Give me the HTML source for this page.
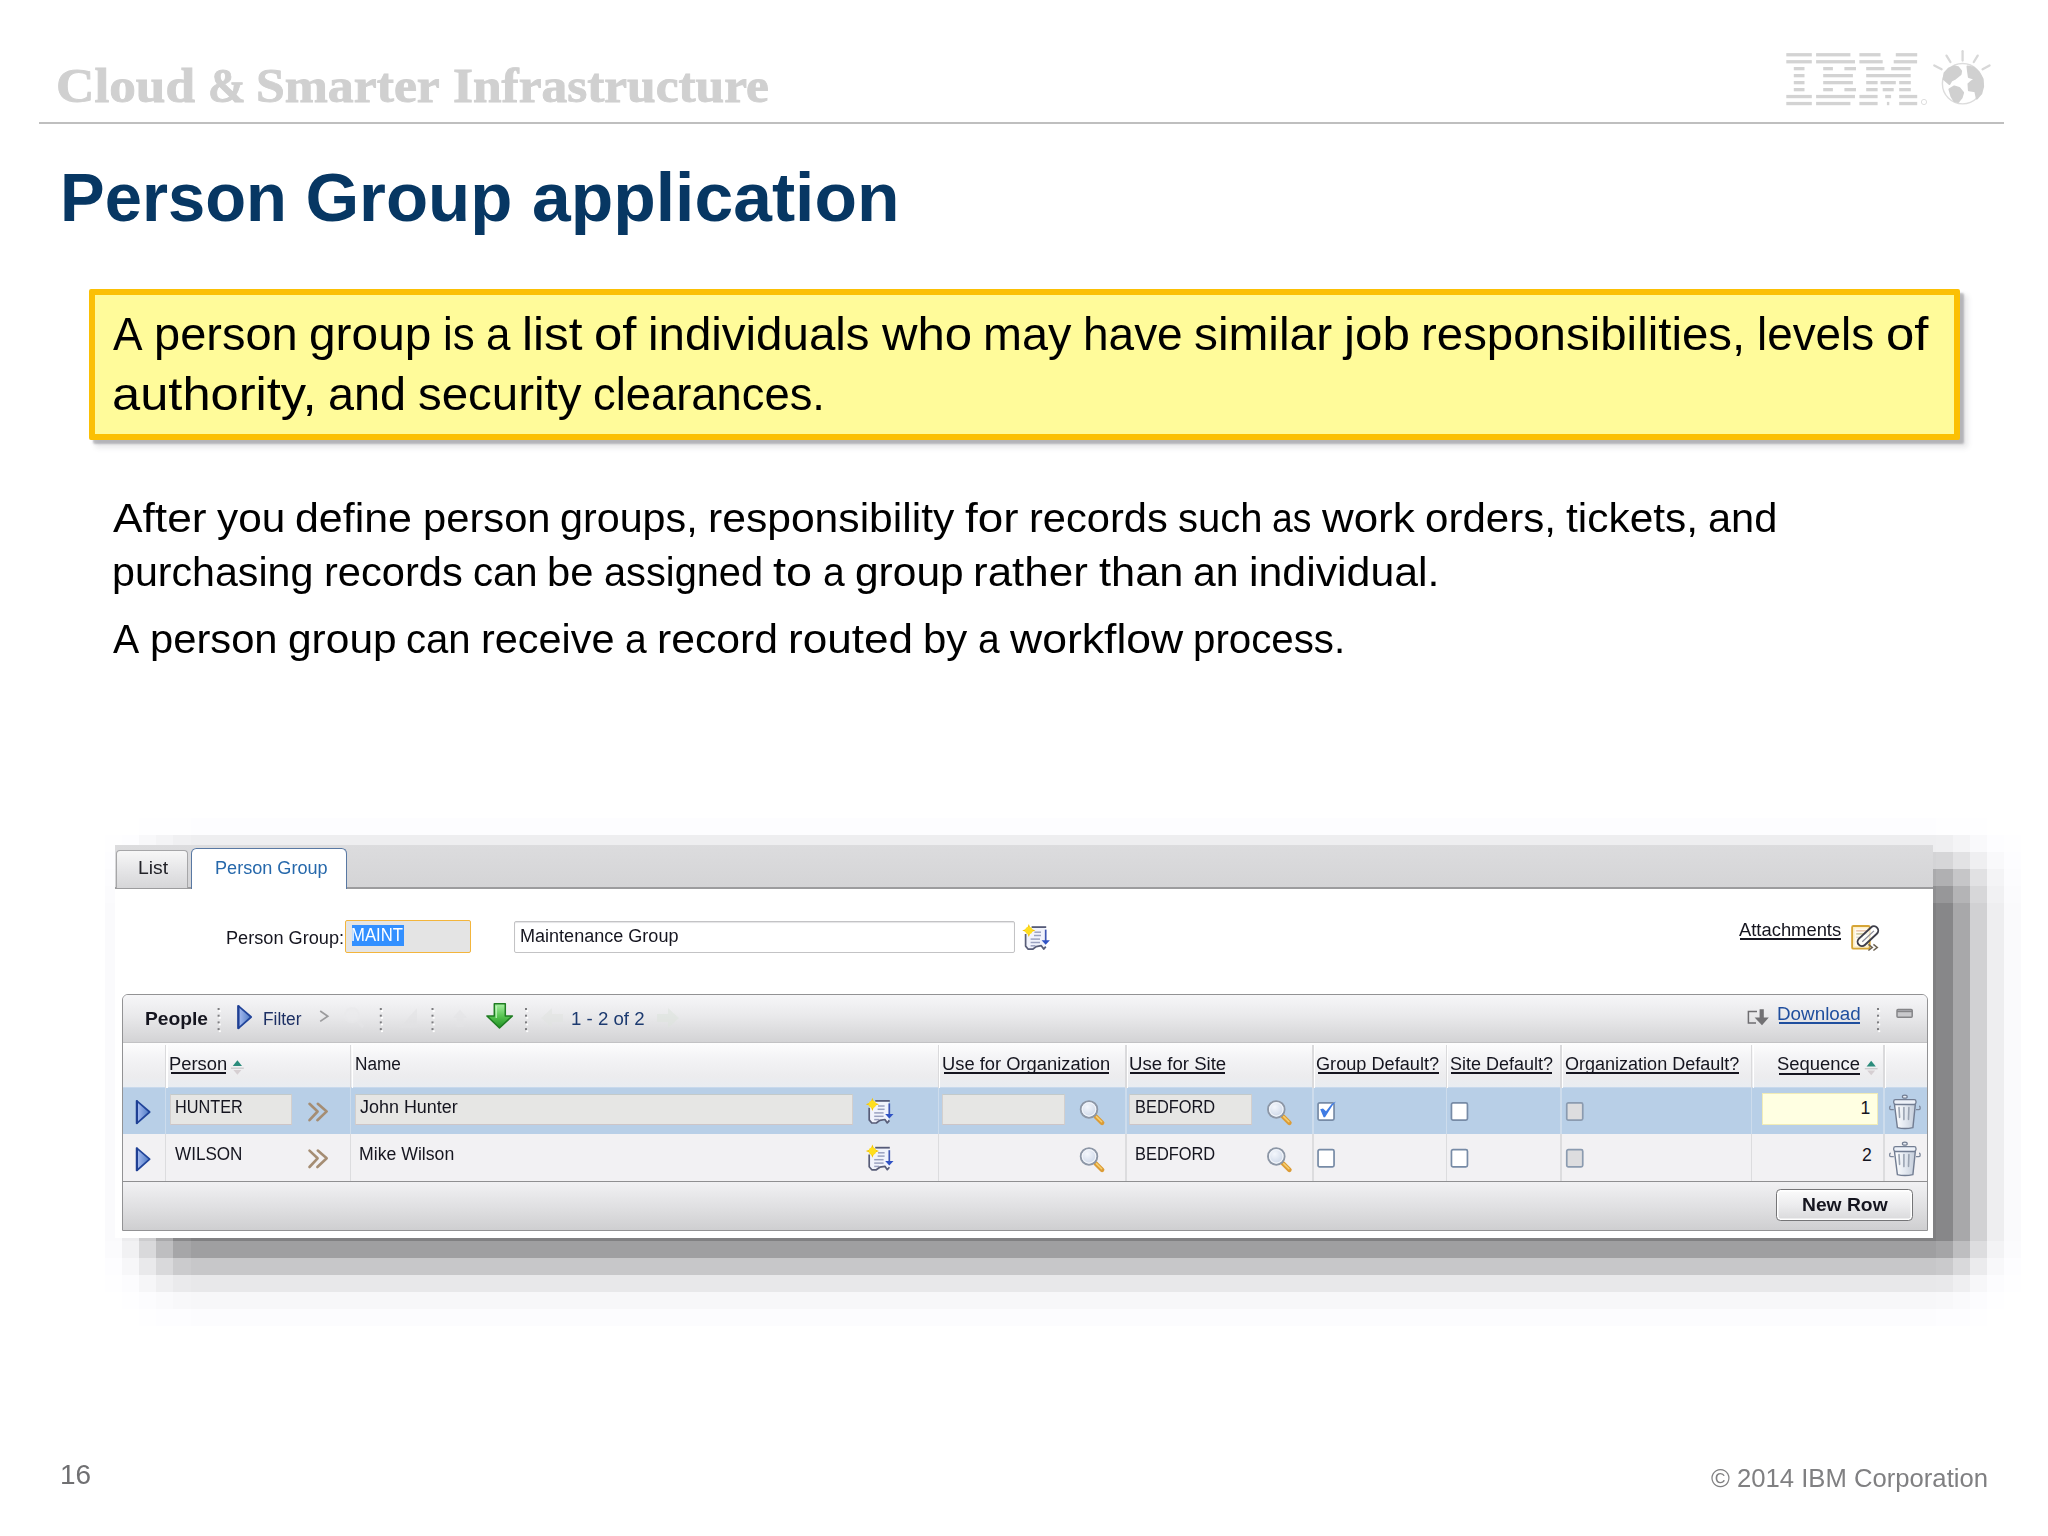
<!DOCTYPE html>
<html lang="en"><head><meta charset="utf-8"><title>Person Group application</title>
<style>
html,body{margin:0;padding:0;background:#fff}
body{width:2048px;height:1536px;position:relative;overflow:hidden;font-family:"Liberation Sans",sans-serif;color:#000}
div,span,svg{box-sizing:border-box}
.a{position:absolute}
.t{position:absolute;white-space:nowrap;line-height:1;transform-origin:0 0;font-family:"Liberation Sans",sans-serif}
.s{font-family:"Liberation Serif",serif;-webkit-text-stroke:.9px #d0d0d0}
.u{position:absolute;height:2px;background:#111}
.hl{position:absolute;left:39px;top:122px;width:1965px;height:2px;background:#bfbfbf}
.ybox{position:absolute;left:89.3px;top:288.8px;width:1870.4px;height:151.2px;border:6.2px solid #fbc005;border-radius:2px;background:#fffb9a;box-shadow:4px 4px 2px 0 rgba(85,85,95,.36),7px 7px 5px 1px rgba(90,90,100,.13)}
</style></head><body>

<div class="hl"></div>
<svg class="a" style="left:0;top:0;filter:blur(.55px)" width="2048" height="140">
<g fill="#d3d3d3">
<rect x="1786.3" y="53.1" width="25.5" height="3.3"/>
<rect x="1816.1" y="53.1" width="34.3" height="3.3"/>
<rect x="1859.4" y="53.1" width="21.1" height="3.3"/>
<rect x="1895.8" y="53.1" width="21.4" height="3.3"/>
<rect x="1786.3" y="60.1" width="25.5" height="3.3"/>
<rect x="1816.1" y="60.1" width="38.9" height="3.3"/>
<rect x="1859.4" y="60.1" width="23.3" height="3.3"/>
<rect x="1893.7" y="60.1" width="23.4" height="3.3"/>
<rect x="1793.8" y="67.0" width="10.7" height="3.3"/>
<rect x="1823.2" y="67.0" width="9.7" height="3.3"/>
<rect x="1844.4" y="67.0" width="11.6" height="3.3"/>
<rect x="1866.2" y="67.0" width="18.2" height="3.3"/>
<rect x="1891.2" y="67.0" width="19.5" height="3.3"/>
<rect x="1793.8" y="74.0" width="10.7" height="3.3"/>
<rect x="1823.2" y="74.0" width="29.7" height="3.3"/>
<rect x="1866.2" y="74.0" width="44.5" height="3.3"/>
<rect x="1793.8" y="81.0" width="10.7" height="3.3"/>
<rect x="1823.2" y="81.0" width="29.7" height="3.3"/>
<rect x="1866.2" y="81.0" width="11.4" height="3.3"/>
<rect x="1880.5" y="81.0" width="15.3" height="3.3"/>
<rect x="1899.2" y="81.0" width="11.6" height="3.3"/>
<rect x="1793.8" y="88.0" width="10.7" height="3.3"/>
<rect x="1823.2" y="88.0" width="9.7" height="3.3"/>
<rect x="1844.4" y="88.0" width="11.6" height="3.3"/>
<rect x="1866.2" y="88.0" width="11.4" height="3.3"/>
<rect x="1882.7" y="88.0" width="11.0" height="3.3"/>
<rect x="1899.2" y="88.0" width="11.6" height="3.3"/>
<rect x="1786.3" y="94.9" width="25.5" height="3.3"/>
<rect x="1816.1" y="94.9" width="38.9" height="3.3"/>
<rect x="1859.4" y="94.9" width="18.2" height="3.3"/>
<rect x="1885.2" y="94.9" width="5.9" height="3.3"/>
<rect x="1899.2" y="94.9" width="18.0" height="3.3"/>
<rect x="1786.3" y="101.9" width="25.5" height="3.3"/>
<rect x="1816.1" y="101.9" width="34.3" height="3.3"/>
<rect x="1859.4" y="101.9" width="18.2" height="3.3"/>
<rect x="1886.9" y="101.9" width="2.4" height="3.3"/>
<rect x="1899.2" y="101.9" width="18.0" height="3.3"/>
</g>
<circle cx="1924" cy="102" r="2.6" fill="none" stroke="#dedede" stroke-width="1"/>
<g stroke="#d8d8d8" stroke-width="2.3" stroke-linecap="round">
<line x1="1934.3" y1="65.4" x2="1941.6" y2="69.3"/>
<line x1="1946.5" y1="55.6" x2="1950.4" y2="62.0"/>
<line x1="1962.6" y1="51.2" x2="1962.6" y2="60.5"/>
<line x1="1977.7" y1="55.6" x2="1973.8" y2="62.0"/>
<line x1="1989.5" y1="65.4" x2="1982.6" y2="69.3"/>
</g>
<circle cx="1962.6" cy="83.7" r="20.2" fill="#fff" stroke="#dcdcdc" stroke-width="1.4"/>
<g fill="#d0d0d0" stroke="#d0d0d0" stroke-width="2" stroke-linejoin="round">
<path d="M1943.6 79.1L1944.5 73.2L1948.4 68.8L1954.3 66.4L1958.2 67.3L1961.1 71.2L1960.6 74.2L1955.3 78.6L1951.4 80.5L1949.4 83.9L1946.5 81.5Z"/>
<path d="M1949.4 89.3L1954.3 86.4L1959.2 87.9L1963.1 92.7L1961.6 97.6L1958.2 102.0L1954.3 101.0L1951.4 96.2Z"/>
<path d="M1967.5 66.4L1973.8 67.8L1978.7 72.2L1982.6 79.1L1983.1 86.4L1981.2 93.7L1976.8 98.6L1975.3 91.3L1968.9 90.3L1968.5 83.9L1971.9 81.0L1975.3 79.1L1968.9 77.1L1968.0 71.2Z"/>
</g>
</svg>
<div class="ybox"></div>

<svg class="a" style="left:0;top:0" width="2048" height="1536" shape-rendering="crispEdges">
<rect x="105.0" y="817.9" width="17.16" height="16.98" fill="rgb(255,255,255)"/>
<rect x="122.1" y="817.9" width="17.16" height="16.98" fill="rgb(255,255,255)"/>
<rect x="139.2" y="817.9" width="17.16" height="16.98" fill="rgb(254,254,255)"/>
<rect x="156.3" y="817.9" width="17.16" height="16.98" fill="rgb(254,254,255)"/>
<rect x="173.4" y="817.9" width="17.16" height="16.98" fill="rgb(254,254,255)"/>
<rect x="190.5" y="817.9" width="1745.27" height="16.98" fill="rgb(253,253,255)"/>
<rect x="1935.8" y="817.9" width="17.16" height="16.98" fill="rgb(254,254,255)"/>
<rect x="1952.9" y="817.9" width="17.16" height="16.98" fill="rgb(254,254,255)"/>
<rect x="1970.0" y="817.9" width="17.16" height="16.98" fill="rgb(254,254,255)"/>
<rect x="1987.1" y="817.9" width="17.16" height="16.98" fill="rgb(255,255,255)"/>
<rect x="2004.2" y="817.9" width="17.16" height="16.98" fill="rgb(255,255,255)"/>
<rect x="105.0" y="834.9" width="17.16" height="16.98" fill="rgb(254,254,255)"/>
<rect x="122.1" y="834.9" width="17.16" height="16.98" fill="rgb(253,253,255)"/>
<rect x="139.2" y="834.9" width="17.16" height="16.98" fill="rgb(248,248,250)"/>
<rect x="156.3" y="834.9" width="17.16" height="16.98" fill="rgb(244,244,246)"/>
<rect x="173.4" y="834.9" width="17.16" height="16.98" fill="rgb(240,240,242)"/>
<rect x="190.5" y="834.9" width="1745.27" height="16.98" fill="rgb(238,238,240)"/>
<rect x="1935.8" y="834.9" width="17.16" height="16.98" fill="rgb(239,239,241)"/>
<rect x="1952.9" y="834.9" width="17.16" height="16.98" fill="rgb(244,244,246)"/>
<rect x="1970.0" y="834.9" width="17.16" height="16.98" fill="rgb(249,249,251)"/>
<rect x="1987.1" y="834.9" width="17.16" height="16.98" fill="rgb(253,253,255)"/>
<rect x="2004.2" y="834.9" width="17.16" height="16.98" fill="rgb(254,254,255)"/>
<rect x="105.0" y="851.8" width="17.16" height="16.98" fill="rgb(253,253,255)"/>
<rect x="190.5" y="851.8" width="1745.27" height="16.98" fill="rgb(212,212,214)"/>
<rect x="1935.8" y="851.8" width="17.16" height="16.98" fill="rgb(214,214,216)"/>
<rect x="1952.9" y="851.8" width="17.16" height="16.98" fill="rgb(226,226,228)"/>
<rect x="1970.0" y="851.8" width="17.16" height="16.98" fill="rgb(239,239,241)"/>
<rect x="1987.1" y="851.8" width="17.16" height="16.98" fill="rgb(249,249,251)"/>
<rect x="2004.2" y="851.8" width="17.16" height="16.98" fill="rgb(253,253,255)"/>
<rect x="105.0" y="868.7" width="17.16" height="16.98" fill="rgb(252,252,254)"/>
<rect x="190.5" y="868.7" width="1745.27" height="16.98" fill="rgb(171,171,173)"/>
<rect x="1935.8" y="868.7" width="17.16" height="16.98" fill="rgb(176,176,178)"/>
<rect x="1952.9" y="868.7" width="17.16" height="16.98" fill="rgb(198,198,200)"/>
<rect x="1970.0" y="868.7" width="17.16" height="16.98" fill="rgb(225,225,227)"/>
<rect x="1987.1" y="868.7" width="17.16" height="16.98" fill="rgb(244,244,246)"/>
<rect x="2004.2" y="868.7" width="17.16" height="16.98" fill="rgb(252,252,254)"/>
<rect x="105.0" y="885.7" width="17.16" height="16.98" fill="rgb(251,251,253)"/>
<rect x="190.5" y="885.7" width="1745.27" height="16.98" fill="rgb(144,144,146)"/>
<rect x="1935.8" y="885.7" width="17.16" height="16.98" fill="rgb(151,151,153)"/>
<rect x="1952.9" y="885.7" width="17.16" height="16.98" fill="rgb(180,180,182)"/>
<rect x="1970.0" y="885.7" width="17.16" height="16.98" fill="rgb(215,215,217)"/>
<rect x="1987.1" y="885.7" width="17.16" height="16.98" fill="rgb(241,241,243)"/>
<rect x="2004.2" y="885.7" width="17.16" height="16.98" fill="rgb(251,251,253)"/>
<rect x="105.0" y="902.6" width="17.16" height="338.65" fill="rgb(250,250,252)"/>
<rect x="122.1" y="902.6" width="17.16" height="338.65" fill="rgb(236,236,238)"/>
<rect x="139.2" y="902.6" width="17.16" height="338.65" fill="rgb(204,204,206)"/>
<rect x="156.3" y="902.6" width="17.16" height="338.65" fill="rgb(168,168,170)"/>
<rect x="173.4" y="902.6" width="17.16" height="338.65" fill="rgb(136,136,138)"/>
<rect x="190.5" y="902.6" width="1745.27" height="338.65" fill="rgb(128,128,130)"/>
<rect x="1935.8" y="902.6" width="17.16" height="338.65" fill="rgb(135,135,137)"/>
<rect x="1952.9" y="902.6" width="17.16" height="338.65" fill="rgb(168,168,170)"/>
<rect x="1970.0" y="902.6" width="17.16" height="338.65" fill="rgb(209,209,211)"/>
<rect x="1987.1" y="902.6" width="17.16" height="338.65" fill="rgb(238,238,240)"/>
<rect x="2004.2" y="902.6" width="17.16" height="338.65" fill="rgb(250,250,252)"/>
<rect x="105.0" y="1241.2" width="17.16" height="16.98" fill="rgb(251,251,253)"/>
<rect x="122.1" y="1241.2" width="17.16" height="16.98" fill="rgb(241,241,243)"/>
<rect x="139.2" y="1241.2" width="17.16" height="16.98" fill="rgb(217,217,219)"/>
<rect x="156.3" y="1241.2" width="17.16" height="16.98" fill="rgb(190,190,192)"/>
<rect x="173.4" y="1241.2" width="17.16" height="16.98" fill="rgb(166,166,168)"/>
<rect x="190.5" y="1241.2" width="1745.27" height="16.98" fill="rgb(159,159,161)"/>
<rect x="1935.8" y="1241.2" width="17.16" height="16.98" fill="rgb(165,165,167)"/>
<rect x="1952.9" y="1241.2" width="17.16" height="16.98" fill="rgb(190,190,192)"/>
<rect x="1970.0" y="1241.2" width="17.16" height="16.98" fill="rgb(221,221,223)"/>
<rect x="1987.1" y="1241.2" width="17.16" height="16.98" fill="rgb(243,243,245)"/>
<rect x="2004.2" y="1241.2" width="17.16" height="16.98" fill="rgb(251,251,253)"/>
<rect x="105.0" y="1258.1" width="17.16" height="16.98" fill="rgb(253,253,255)"/>
<rect x="122.1" y="1258.1" width="17.16" height="16.98" fill="rgb(247,247,249)"/>
<rect x="139.2" y="1258.1" width="17.16" height="16.98" fill="rgb(233,233,235)"/>
<rect x="156.3" y="1258.1" width="17.16" height="16.98" fill="rgb(217,217,219)"/>
<rect x="173.4" y="1258.1" width="17.16" height="16.98" fill="rgb(203,203,205)"/>
<rect x="190.5" y="1258.1" width="1745.27" height="16.98" fill="rgb(199,199,201)"/>
<rect x="1935.8" y="1258.1" width="17.16" height="16.98" fill="rgb(202,202,204)"/>
<rect x="1952.9" y="1258.1" width="17.16" height="16.98" fill="rgb(217,217,219)"/>
<rect x="1970.0" y="1258.1" width="17.16" height="16.98" fill="rgb(235,235,237)"/>
<rect x="1987.1" y="1258.1" width="17.16" height="16.98" fill="rgb(248,248,250)"/>
<rect x="2004.2" y="1258.1" width="17.16" height="16.98" fill="rgb(253,253,255)"/>
<rect x="105.0" y="1275.0" width="17.16" height="16.98" fill="rgb(254,254,255)"/>
<rect x="122.1" y="1275.0" width="17.16" height="16.98" fill="rgb(252,252,254)"/>
<rect x="139.2" y="1275.0" width="17.16" height="16.98" fill="rgb(246,246,248)"/>
<rect x="156.3" y="1275.0" width="17.16" height="16.98" fill="rgb(239,239,241)"/>
<rect x="173.4" y="1275.0" width="17.16" height="16.98" fill="rgb(234,234,236)"/>
<rect x="190.5" y="1275.0" width="1745.27" height="16.98" fill="rgb(232,232,234)"/>
<rect x="1935.8" y="1275.0" width="17.16" height="16.98" fill="rgb(233,233,235)"/>
<rect x="1952.9" y="1275.0" width="17.16" height="16.98" fill="rgb(239,239,241)"/>
<rect x="1970.0" y="1275.0" width="17.16" height="16.98" fill="rgb(247,247,249)"/>
<rect x="1987.1" y="1275.0" width="17.16" height="16.98" fill="rgb(252,252,254)"/>
<rect x="2004.2" y="1275.0" width="17.16" height="16.98" fill="rgb(254,254,255)"/>
<rect x="105.0" y="1292.0" width="17.16" height="16.98" fill="rgb(255,255,255)"/>
<rect x="122.1" y="1292.0" width="17.16" height="16.98" fill="rgb(254,254,255)"/>
<rect x="139.2" y="1292.0" width="17.16" height="16.98" fill="rgb(252,252,254)"/>
<rect x="156.3" y="1292.0" width="17.16" height="16.98" fill="rgb(250,250,252)"/>
<rect x="173.4" y="1292.0" width="17.16" height="16.98" fill="rgb(248,248,250)"/>
<rect x="190.5" y="1292.0" width="1745.27" height="16.98" fill="rgb(247,247,249)"/>
<rect x="1935.8" y="1292.0" width="17.16" height="16.98" fill="rgb(248,248,250)"/>
<rect x="1952.9" y="1292.0" width="17.16" height="16.98" fill="rgb(250,250,252)"/>
<rect x="1970.0" y="1292.0" width="17.16" height="16.98" fill="rgb(252,252,254)"/>
<rect x="1987.1" y="1292.0" width="17.16" height="16.98" fill="rgb(254,254,255)"/>
<rect x="2004.2" y="1292.0" width="17.16" height="16.98" fill="rgb(255,255,255)"/>
<rect x="105.0" y="1308.9" width="17.16" height="16.98" fill="rgb(255,255,255)"/>
<rect x="122.1" y="1308.9" width="17.16" height="16.98" fill="rgb(255,255,255)"/>
<rect x="139.2" y="1308.9" width="17.16" height="16.98" fill="rgb(254,254,255)"/>
<rect x="156.3" y="1308.9" width="17.16" height="16.98" fill="rgb(253,253,255)"/>
<rect x="173.4" y="1308.9" width="17.16" height="16.98" fill="rgb(253,253,255)"/>
<rect x="190.5" y="1308.9" width="1745.27" height="16.98" fill="rgb(252,252,254)"/>
<rect x="1935.8" y="1308.9" width="17.16" height="16.98" fill="rgb(253,253,255)"/>
<rect x="1952.9" y="1308.9" width="17.16" height="16.98" fill="rgb(253,253,255)"/>
<rect x="1970.0" y="1308.9" width="17.16" height="16.98" fill="rgb(254,254,255)"/>
<rect x="1987.1" y="1308.9" width="17.16" height="16.98" fill="rgb(255,255,255)"/>
<rect x="2004.2" y="1308.9" width="17.16" height="16.98" fill="rgb(255,255,255)"/>
</svg>
<!-- application screenshot -->
<div class="a" style="left:115px;top:845px;width:1818px;height:393px;background:#fff"></div>
<div class="a" style="left:115px;top:845px;width:1818px;height:43px;background:linear-gradient(#dcdcde,#d4d4d6)"></div>
<div class="a" style="left:115px;top:887px;width:1818px;height:2px;background:#9c9c9e"></div>
<div class="a" style="left:115.5px;top:849.5px;width:72px;height:38.5px;border:1.5px solid #a6a6a8;border-bottom:none;border-radius:4px 4px 0 0;background:linear-gradient(#f7f7f7,#e4e4e6 55%,#d6d6d8)"></div>
<div class="a" style="left:190.7px;top:847.6px;width:156.2px;height:41px;border:1.7px solid #5878a3;border-bottom:none;border-radius:5.5px 5.5px 0 0;background:#fff"></div>
<!-- form fields -->
<div class="a" style="left:345px;top:920px;width:125.5px;height:33px;border:1.7px solid #f3b53c;border-radius:2px;background:#e4e4e4"></div>
<div class="a" style="left:352px;top:925px;width:52px;height:21.2px;background:#3390ff"></div>
<div class="a" style="left:514px;top:920.5px;width:500.5px;height:32.5px;border:1.5px solid #c3c3c5;border-radius:2px;background:#fff;box-shadow:inset 0 1px 1px #e4e4e6"></div>
<!-- table panel -->
<div class="a" style="left:122px;top:994px;width:1806px;height:237px;border:1.8px solid #929294;border-radius:6px 6px 0 0;background:#f2f1f3;overflow:hidden">
 <div class="a" style="left:0;top:0;width:1806px;height:48px;background:linear-gradient(#f6f6f8,#e9e9eb 45%,#d3d3d5);border-bottom:1.5px solid #c2c2c4"></div>
 <div class="a" style="left:0;top:48px;width:1806px;height:44.5px;background:linear-gradient(#fdfdfd,#f3f3f5 35%,#ececee 75%,#e9edf2)"></div>
 <div class="a" style="left:0;top:92.3px;width:1806px;height:47px;background:#b8cfe7;border-top:1.5px solid #c8d9ec"></div>
 <div class="a" style="left:0;top:185.5px;width:1806px;height:2px;background:#8f8f91"></div>
 <div class="a" style="left:0;top:187px;width:1806px;height:50px;background:linear-gradient(#f1f1f3,#e0e0e2 50%,#cdcdcf)"></div>
</div>
<div class="a" style="left:164.8px;top:1044.5px;width:1.6px;height:43px;background:#dadadc"></div>
<div class="a" style="left:166.4px;top:1044.5px;width:1.2px;height:43px;background:#fff"></div>
<div class="a" style="left:164.8px;top:1087.5px;width:1.6px;height:46.5px;background:#cddcec"></div>
<div class="a" style="left:164.8px;top:1134px;width:1.6px;height:47px;background:#dcdcde"></div>
<div class="a" style="left:349.9px;top:1044.5px;width:1.6px;height:43px;background:#dadadc"></div>
<div class="a" style="left:351.5px;top:1044.5px;width:1.2px;height:43px;background:#fff"></div>
<div class="a" style="left:349.9px;top:1087.5px;width:1.6px;height:46.5px;background:#cddcec"></div>
<div class="a" style="left:349.9px;top:1134px;width:1.6px;height:47px;background:#dcdcde"></div>
<div class="a" style="left:937.5px;top:1044.5px;width:1.6px;height:43px;background:#dadadc"></div>
<div class="a" style="left:939.1px;top:1044.5px;width:1.2px;height:43px;background:#fff"></div>
<div class="a" style="left:937.5px;top:1087.5px;width:1.6px;height:46.5px;background:#cddcec"></div>
<div class="a" style="left:937.5px;top:1134px;width:1.6px;height:47px;background:#dcdcde"></div>
<div class="a" style="left:1125.0px;top:1044.5px;width:1.6px;height:43px;background:#dadadc"></div>
<div class="a" style="left:1126.6px;top:1044.5px;width:1.2px;height:43px;background:#fff"></div>
<div class="a" style="left:1125.0px;top:1087.5px;width:1.6px;height:46.5px;background:#cddcec"></div>
<div class="a" style="left:1125.0px;top:1134px;width:1.6px;height:47px;background:#dcdcde"></div>
<div class="a" style="left:1312.2px;top:1044.5px;width:1.6px;height:43px;background:#dadadc"></div>
<div class="a" style="left:1313.8px;top:1044.5px;width:1.2px;height:43px;background:#fff"></div>
<div class="a" style="left:1312.2px;top:1087.5px;width:1.6px;height:46.5px;background:#cddcec"></div>
<div class="a" style="left:1312.2px;top:1134px;width:1.6px;height:47px;background:#dcdcde"></div>
<div class="a" style="left:1445.7px;top:1044.5px;width:1.6px;height:43px;background:#dadadc"></div>
<div class="a" style="left:1447.3px;top:1044.5px;width:1.2px;height:43px;background:#fff"></div>
<div class="a" style="left:1445.7px;top:1087.5px;width:1.6px;height:46.5px;background:#cddcec"></div>
<div class="a" style="left:1445.7px;top:1134px;width:1.6px;height:47px;background:#dcdcde"></div>
<div class="a" style="left:1560.4px;top:1044.5px;width:1.6px;height:43px;background:#dadadc"></div>
<div class="a" style="left:1562.0px;top:1044.5px;width:1.2px;height:43px;background:#fff"></div>
<div class="a" style="left:1560.4px;top:1087.5px;width:1.6px;height:46.5px;background:#cddcec"></div>
<div class="a" style="left:1560.4px;top:1134px;width:1.6px;height:47px;background:#dcdcde"></div>
<div class="a" style="left:1750.9px;top:1044.5px;width:1.6px;height:43px;background:#dadadc"></div>
<div class="a" style="left:1752.5px;top:1044.5px;width:1.2px;height:43px;background:#fff"></div>
<div class="a" style="left:1750.9px;top:1087.5px;width:1.6px;height:46.5px;background:#cddcec"></div>
<div class="a" style="left:1750.9px;top:1134px;width:1.6px;height:47px;background:#dcdcde"></div>
<div class="a" style="left:1883.1px;top:1044.5px;width:1.6px;height:43px;background:#dadadc"></div>
<div class="a" style="left:1884.7px;top:1044.5px;width:1.2px;height:43px;background:#fff"></div>
<div class="a" style="left:1883.1px;top:1087.5px;width:1.6px;height:46.5px;background:#cddcec"></div>
<div class="a" style="left:1883.1px;top:1134px;width:1.6px;height:47px;background:#dcdcde"></div>
<div class="a" style="left:169.7px;top:1093.6px;width:122.5px;height:31.2px;background:#e6e6e4;border:1.5px solid #d3cfcd;border-top-color:#c3caca;border-bottom-color:#cdc5c7"></div>
<div class="a" style="left:354.6px;top:1093.6px;width:498.2px;height:31.2px;background:#e6e6e4;border:1.5px solid #d3cfcd;border-top-color:#c3caca;border-bottom-color:#cdc5c7"></div>
<div class="a" style="left:942.4px;top:1093.6px;width:122.7px;height:31.2px;background:#e6e6e4;border:1.5px solid #d3cfcd;border-top-color:#c3caca;border-bottom-color:#cdc5c7"></div>
<div class="a" style="left:1129.2px;top:1093.6px;width:123.1px;height:31.2px;background:#e6e6e4;border:1.5px solid #d3cfcd;border-top-color:#c3caca;border-bottom-color:#cdc5c7"></div>
<div class="a" style="left:1762px;top:1093.4px;width:115.5px;height:31.7px;background:#ffffe2;border:1.6px solid #f1ecb6"></div>
<div class="a" style="left:1776.3px;top:1188.5px;width:137.2px;height:32.2px;border:1.7px solid #757577;border-radius:4.5px;background:linear-gradient(#fbfbfb,#ececee 50%,#d9d9db);box-shadow:inset 0 0 0 1.5px #fff"></div>

<svg class="a" style="left:0;top:0" width="2048" height="1536" viewBox="0 0 2048 1536">
<defs>
<linearGradient id="gTri" x1="0" x2="1" y1="0" y2="0"><stop offset="0" stop-color="#a9bef2"/><stop offset="1" stop-color="#4c78c2"/></linearGradient>
<linearGradient id="gGrn" x1="0" x2="0" y1="0" y2="1"><stop offset="0" stop-color="#a8f0a2"/><stop offset=".55" stop-color="#52c04c"/><stop offset="1" stop-color="#1f8f24"/></linearGradient>
<linearGradient id="gCan" x1="0" x2="1" y1="0" y2="0"><stop offset="0" stop-color="#ffffff"/><stop offset=".5" stop-color="#e4e9f1"/><stop offset="1" stop-color="#c3ccd9"/></linearGradient>
<radialGradient id="gLens" cx=".4" cy=".35" r=".7"><stop offset="0" stop-color="#f4f7fc"/><stop offset="1" stop-color="#c9d4e6"/></radialGradient>









</defs>
<!-- row markers -->
<g transform="translate(135.8 1100)"><g><path d="M1 .9L1 23.3L13.9 12Z" fill="url(#gTri)" stroke="#21449a" stroke-width="1.7" stroke-linejoin="round"/><path d="M1.1 .5V23.7" stroke="#1f3f93" stroke-width="2.2"/></g></g><g transform="translate(135.8 1147.2)"><g><path d="M1 .9L1 23.3L13.9 12Z" fill="url(#gTri)" stroke="#21449a" stroke-width="1.7" stroke-linejoin="round"/><path d="M1.1 .5V23.7" stroke="#1f3f93" stroke-width="2.2"/></g></g>
<g transform="translate(237.3 1005)"><g><path d="M1 .9L1 23.3L13.9 12Z" fill="url(#gTri)" stroke="#21449a" stroke-width="1.7" stroke-linejoin="round"/><path d="M1.1 .5V23.7" stroke="#1f3f93" stroke-width="2.2"/></g></g>
<g transform="translate(308.2 1102.6)"><g fill="none" stroke="#a58d73" stroke-width="2.6" stroke-linecap="round" stroke-linejoin="round"><path d="M1.3 1.2L9.4 8.9L1.3 17.6"/><path d="M9.6 1.2L18.5 8.8L9.2 17.6"/></g></g><g transform="translate(308.2 1149.4)"><g fill="none" stroke="#a58d73" stroke-width="2.6" stroke-linecap="round" stroke-linejoin="round"><path d="M1.3 1.2L9.4 8.9L1.3 17.6"/><path d="M9.6 1.2L18.5 8.8L9.2 17.6"/></g></g>
<!-- toolbar -->
<g transform="translate(217.6 1008)"><g><g fill="#7d7d80"><rect x="0" y="0" width="2" height="2"/><rect x="0" y="6.7" width="2" height="2"/><rect x="0" y="13.4" width="2" height="2"/><rect x="0" y="20.1" width="2" height="2"/></g><g fill="#fff"><rect x="1.2" y="2.2" width="2" height="1.8"/><rect x="1.2" y="8.9" width="2" height="1.8"/><rect x="1.2" y="15.6" width="2" height="1.8"/><rect x="1.2" y="22.3" width="2" height="1.8"/></g></g></g><g transform="translate(379.8 1008)"><g><g fill="#7d7d80"><rect x="0" y="0" width="2" height="2"/><rect x="0" y="6.7" width="2" height="2"/><rect x="0" y="13.4" width="2" height="2"/><rect x="0" y="20.1" width="2" height="2"/></g><g fill="#fff"><rect x="1.2" y="2.2" width="2" height="1.8"/><rect x="1.2" y="8.9" width="2" height="1.8"/><rect x="1.2" y="15.6" width="2" height="1.8"/><rect x="1.2" y="22.3" width="2" height="1.8"/></g></g></g><g transform="translate(431.5 1008)"><g><g fill="#7d7d80"><rect x="0" y="0" width="2" height="2"/><rect x="0" y="6.7" width="2" height="2"/><rect x="0" y="13.4" width="2" height="2"/><rect x="0" y="20.1" width="2" height="2"/></g><g fill="#fff"><rect x="1.2" y="2.2" width="2" height="1.8"/><rect x="1.2" y="8.9" width="2" height="1.8"/><rect x="1.2" y="15.6" width="2" height="1.8"/><rect x="1.2" y="22.3" width="2" height="1.8"/></g></g></g><g transform="translate(525 1008)"><g><g fill="#7d7d80"><rect x="0" y="0" width="2" height="2"/><rect x="0" y="6.7" width="2" height="2"/><rect x="0" y="13.4" width="2" height="2"/><rect x="0" y="20.1" width="2" height="2"/></g><g fill="#fff"><rect x="1.2" y="2.2" width="2" height="1.8"/><rect x="1.2" y="8.9" width="2" height="1.8"/><rect x="1.2" y="15.6" width="2" height="1.8"/><rect x="1.2" y="22.3" width="2" height="1.8"/></g></g></g><g transform="translate(1877 1008)"><g><g fill="#7d7d80"><rect x="0" y="0" width="2" height="2"/><rect x="0" y="6.7" width="2" height="2"/><rect x="0" y="13.4" width="2" height="2"/><rect x="0" y="20.1" width="2" height="2"/></g><g fill="#fff"><rect x="1.2" y="2.2" width="2" height="1.8"/><rect x="1.2" y="8.9" width="2" height="1.8"/><rect x="1.2" y="15.6" width="2" height="1.8"/><rect x="1.2" y="22.3" width="2" height="1.8"/></g></g></g>
<path d="M320.2 1011L327.8 1016.2L320.2 1021.4" fill="none" stroke="#9b9b9d" stroke-width="1.7"/>
<path d="M494.3 1003.8H505.3V1015.9H512.4L499.5 1028L486.9 1015.9H494.3Z" fill="url(#gGrn)" stroke="#1f7d22" stroke-width="1.5" stroke-linejoin="round"/>
<path d="M496.3 1006V1018" stroke="#c4f7c0" stroke-width="1.5" opacity=".8"/>
<!-- faded toolbar icons -->
<g opacity=".55"><circle cx="352" cy="1015" r="7" fill="#ebebed" stroke="#e9e9eb" stroke-width="2"/><path d="M357.5 1021L363 1027" stroke="#e6e6e8" stroke-width="3"/>
<path d="M399 1028L417 1008V1028Z" fill="#e2e2e4"/>
<path d="M452.5 1018L460 1009.5L467.5 1018H463.5V1027H456.5V1018Z" fill="#e4e4e6"/>
<path d="M541 1018L552 1008V1014H563V1022H552V1028Z" fill="#e1e4e1"/>
<path d="M679 1018L668 1008V1014H657V1022H668V1028Z" fill="#dde4dd"/></g>
<!-- download icon -->
<path d="M1757 1011.6H1748.4V1022.9H1756" fill="none" stroke="#6f6e71" stroke-width="1.5"/>
<path d="M1759.6 1009.3H1763.8V1017.4H1768.8L1762 1025.3L1754.6 1017.4H1759.6Z" fill="#727174"/>
<!-- minimize icon -->
<rect x="1897" y="1009.6" width="15.2" height="7.6" rx="1" fill="#c9c9cc" stroke="#858588" stroke-width="1.5"/><path d="M1897 1011.4H1912.2" stroke="#858588" stroke-width="1.6"/>
<!-- sort icons -->
<g transform="translate(230.4 1060.3)"><g><path d="M7 0L11.6 5.8H2.4Z" fill="#2b8c7c"/><path d="M.6 7.9H13.4" stroke="#c9c9cb" stroke-width="1.3"/><path d="M3 9.8H11L7 14.4Z" fill="#d6cfd2"/></g></g><g transform="translate(1864.2 1060.8)"><g><path d="M7 0L11.6 5.8H2.4Z" fill="#2b8c7c"/><path d="M.6 7.9H13.4" stroke="#c9c9cb" stroke-width="1.3"/><path d="M3 9.8H11L7 14.4Z" fill="#d6cfd2"/></g></g>
<!-- list icons -->
<g transform="translate(1016 918)"><g>
 <path d="M15 9.1H29.2V27.5L27.6 31L25.2 27.7L20.3 28.6L16.6 31.2H12.3L9.6 28.2V15.5Z" fill="#f1f3fc"/>
 <g stroke="#9aa1c0" stroke-width="1.5"><path d="M18.4 14.2H25"/><path d="M18 17.5H25"/><path d="M14.6 21.1H24"/><path d="M14.6 24.5H24"/><path d="M14.6 27.8H19.5"/></g>
 <path d="M15.6 9.1H30.2" stroke="#565b78" stroke-width="1.8" fill="none"/>
 <path d="M9.6 16V28.1L12.2 31.2H16.7L20.2 28.6L25.3 27.7L27.7 31.1L29.8 28.6" stroke="#585d78" stroke-width="1.7" fill="none" stroke-linejoin="round"/>
 <path d="M29.7 11.6V25" stroke="#3f57b4" stroke-width="1.7"/>
 <path d="M25.6 22.3H33.9L29.7 26.8Z" fill="#2f52c4"/>
 <path d="M12.8 5.9L14.6 10.7L19.4 12.5L14.6 14.3L12.8 19.1L11 14.3L6.2 12.5L11 10.7Z" fill="#f4c300"/>
 <path d="M12.8 8.6L15.6 9.7L16.7 12.5L15.6 15.3L12.8 16.4L10 15.3L8.9 12.5L10 9.7Z" fill="#ffde1f"/>
</g></g><g transform="translate(859.6 1091.8)"><g>
 <path d="M15 9.1H29.2V27.5L27.6 31L25.2 27.7L20.3 28.6L16.6 31.2H12.3L9.6 28.2V15.5Z" fill="#f1f3fc"/>
 <g stroke="#9aa1c0" stroke-width="1.5"><path d="M18.4 14.2H25"/><path d="M18 17.5H25"/><path d="M14.6 21.1H24"/><path d="M14.6 24.5H24"/><path d="M14.6 27.8H19.5"/></g>
 <path d="M15.6 9.1H30.2" stroke="#565b78" stroke-width="1.8" fill="none"/>
 <path d="M9.6 16V28.1L12.2 31.2H16.7L20.2 28.6L25.3 27.7L27.7 31.1L29.8 28.6" stroke="#585d78" stroke-width="1.7" fill="none" stroke-linejoin="round"/>
 <path d="M29.7 11.6V25" stroke="#3f57b4" stroke-width="1.7"/>
 <path d="M25.6 22.3H33.9L29.7 26.8Z" fill="#2f52c4"/>
 <path d="M12.8 5.9L14.6 10.7L19.4 12.5L14.6 14.3L12.8 19.1L11 14.3L6.2 12.5L11 10.7Z" fill="#f4c300"/>
 <path d="M12.8 8.6L15.6 9.7L16.7 12.5L15.6 15.3L12.8 16.4L10 15.3L8.9 12.5L10 9.7Z" fill="#ffde1f"/>
</g></g><g transform="translate(859.6 1138.6)"><g>
 <path d="M15 9.1H29.2V27.5L27.6 31L25.2 27.7L20.3 28.6L16.6 31.2H12.3L9.6 28.2V15.5Z" fill="#f1f3fc"/>
 <g stroke="#9aa1c0" stroke-width="1.5"><path d="M18.4 14.2H25"/><path d="M18 17.5H25"/><path d="M14.6 21.1H24"/><path d="M14.6 24.5H24"/><path d="M14.6 27.8H19.5"/></g>
 <path d="M15.6 9.1H30.2" stroke="#565b78" stroke-width="1.8" fill="none"/>
 <path d="M9.6 16V28.1L12.2 31.2H16.7L20.2 28.6L25.3 27.7L27.7 31.1L29.8 28.6" stroke="#585d78" stroke-width="1.7" fill="none" stroke-linejoin="round"/>
 <path d="M29.7 11.6V25" stroke="#3f57b4" stroke-width="1.7"/>
 <path d="M25.6 22.3H33.9L29.7 26.8Z" fill="#2f52c4"/>
 <path d="M12.8 5.9L14.6 10.7L19.4 12.5L14.6 14.3L12.8 19.1L11 14.3L6.2 12.5L11 10.7Z" fill="#f4c300"/>
 <path d="M12.8 8.6L15.6 9.7L16.7 12.5L15.6 15.3L12.8 16.4L10 15.3L8.9 12.5L10 9.7Z" fill="#ffde1f"/>
</g></g>
<!-- magnifiers -->
<g transform="translate(1089 1109.4)"><g>
 <path d="M6.6 7L13.1 13.4" stroke="#dc9c36" stroke-width="4.6" stroke-linecap="round"/>
 <path d="M7.4 7.2L12.6 12.4" stroke="#f6cf70" stroke-width="1.5" stroke-linecap="round"/>
 <circle cx="0" cy="0" r="8.3" fill="url(#gLens)" stroke="#8d97a6" stroke-width="1.9"/>
 <circle cx="0" cy="0" r="6.7" fill="none" stroke="#f2f5fa" stroke-width="1.1"/>
</g></g><g transform="translate(1276.3 1109.4)"><g>
 <path d="M6.6 7L13.1 13.4" stroke="#dc9c36" stroke-width="4.6" stroke-linecap="round"/>
 <path d="M7.4 7.2L12.6 12.4" stroke="#f6cf70" stroke-width="1.5" stroke-linecap="round"/>
 <circle cx="0" cy="0" r="8.3" fill="url(#gLens)" stroke="#8d97a6" stroke-width="1.9"/>
 <circle cx="0" cy="0" r="6.7" fill="none" stroke="#f2f5fa" stroke-width="1.1"/>
</g></g><g transform="translate(1089 1156.4)"><g>
 <path d="M6.6 7L13.1 13.4" stroke="#dc9c36" stroke-width="4.6" stroke-linecap="round"/>
 <path d="M7.4 7.2L12.6 12.4" stroke="#f6cf70" stroke-width="1.5" stroke-linecap="round"/>
 <circle cx="0" cy="0" r="8.3" fill="url(#gLens)" stroke="#8d97a6" stroke-width="1.9"/>
 <circle cx="0" cy="0" r="6.7" fill="none" stroke="#f2f5fa" stroke-width="1.1"/>
</g></g><g transform="translate(1276.3 1156.4)"><g>
 <path d="M6.6 7L13.1 13.4" stroke="#dc9c36" stroke-width="4.6" stroke-linecap="round"/>
 <path d="M7.4 7.2L12.6 12.4" stroke="#f6cf70" stroke-width="1.5" stroke-linecap="round"/>
 <circle cx="0" cy="0" r="8.3" fill="url(#gLens)" stroke="#8d97a6" stroke-width="1.9"/>
 <circle cx="0" cy="0" r="6.7" fill="none" stroke="#f2f5fa" stroke-width="1.1"/>
</g></g>
<!-- checkboxes -->
<g transform="translate(1317.2 1102)"><g><rect x=".85" y=".85" width="16" height="17.2" rx="1.6" fill="#fff" stroke="#778ba6" stroke-width="1.7"/></g></g><g transform="translate(1450.6 1102)"><g><rect x=".85" y=".85" width="16" height="17.2" rx="1.6" fill="#fff" stroke="#778ba6" stroke-width="1.7"/></g></g><g transform="translate(1565.9 1102)"><g><rect x=".85" y=".85" width="16" height="17.2" rx="1.6" fill="#dddddf" stroke="#8b9bb0" stroke-width="1.7"/></g></g>
<g transform="translate(1317.2 1148.8)"><g><rect x=".85" y=".85" width="16" height="17.2" rx="1.6" fill="#fff" stroke="#778ba6" stroke-width="1.7"/></g></g><g transform="translate(1450.6 1148.8)"><g><rect x=".85" y=".85" width="16" height="17.2" rx="1.6" fill="#fff" stroke="#778ba6" stroke-width="1.7"/></g></g><g transform="translate(1565.9 1148.8)"><g><rect x=".85" y=".85" width="16" height="17.2" rx="1.6" fill="#dddddf" stroke="#8b9bb0" stroke-width="1.7"/></g></g>
<path d="M1320.2 1109.2L1323 1108.6L1326 1111.3L1331.6 1104L1336 1101.4L1332.3 1105.8L1325 1117.3L1323.6 1117.3Z" fill="#3f7be4"/>
<!-- trash cans -->
<g transform="translate(1884 1090)"><g>
 <ellipse cx="20.8" cy="6.7" rx="2.4" ry="1.5" fill="#e8edf5" stroke="#727d92" stroke-width="1.2"/>
 <path d="M6.8 16.2c-1.6 0-1.6 3.4 0 3.4h3" fill="none" stroke="#7b869a" stroke-width="1.3"/>
 <path d="M35 16.2c1.6 0 1.6 3.4 0 3.4h-3" fill="none" stroke="#7b869a" stroke-width="1.3"/>
 <path d="M10.5 14.6H31.3L28.9 37.6Q20.8 39.4 13.4 37.6Z" fill="url(#gCan)" stroke="#727d92" stroke-width="1.4" stroke-linejoin="round"/>
 <rect x="9.7" y="9.7" width="22.3" height="4.6" rx="1.8" fill="#edf1f8" stroke="#727d92" stroke-width="1.3"/>
 <g stroke="#9aa3b2" stroke-width="1.6" stroke-linecap="round"><path d="M15 17.6L15.6 27.4"/><path d="M19.9 17.6V29.6"/><path d="M24.9 17.6L24.5 29.4"/></g>
</g></g><g transform="translate(1884 1137)"><g>
 <ellipse cx="20.8" cy="6.7" rx="2.4" ry="1.5" fill="#e8edf5" stroke="#727d92" stroke-width="1.2"/>
 <path d="M6.8 16.2c-1.6 0-1.6 3.4 0 3.4h3" fill="none" stroke="#7b869a" stroke-width="1.3"/>
 <path d="M35 16.2c1.6 0 1.6 3.4 0 3.4h-3" fill="none" stroke="#7b869a" stroke-width="1.3"/>
 <path d="M10.5 14.6H31.3L28.9 37.6Q20.8 39.4 13.4 37.6Z" fill="url(#gCan)" stroke="#727d92" stroke-width="1.4" stroke-linejoin="round"/>
 <rect x="9.7" y="9.7" width="22.3" height="4.6" rx="1.8" fill="#edf1f8" stroke="#727d92" stroke-width="1.3"/>
 <g stroke="#9aa3b2" stroke-width="1.6" stroke-linecap="round"><path d="M15 17.6L15.6 27.4"/><path d="M19.9 17.6V29.6"/><path d="M24.9 17.6L24.5 29.4"/></g>
</g></g>
<!-- attachments icon -->
<g transform="translate(1845 918)">
 <rect x="7.2" y="8" width="17.4" height="22.6" rx="1.2" fill="#fffaf0" stroke="#d6a536" stroke-width="2"/>
 <rect x="9" y="9.8" width="13.8" height="19" fill="none" stroke="#fdeec2" stroke-width="1.2"/>
 <path d="M11.2 12.8H22.4" stroke="#ecc9ae" stroke-width="1.6"/><path d="M11.2 15.9H22.4" stroke="#cdc79c" stroke-width="1.6"/><path d="M11.2 19.3H18" stroke="#dcdcd4" stroke-width="1.4"/>
 <g transform="rotate(-43 22.9 18.2)"><rect x="10.4" y="13.9" width="25" height="8.6" rx="4.3" fill="#fff" fill-opacity=".7" stroke="#3e3e4a" stroke-width="1.9"/><path d="M15 18.4H31" stroke="#8a8a96" stroke-width="1.2"/></g>
 <g fill="none" stroke="#6e6454" stroke-width="1.5"><path d="M23.4 26.4L27.3 29.4L23.4 32.5"/><path d="M28.4 26.4L32.3 29.4L28.4 32.5"/></g>
</g>
</svg>

<span class="t s" style="left:55.7px;top:60.8px;font-size:49.5px;color:#d0d0d0;transform:scaleX(1.0749);font-weight:700">Cloud</span>
<span class="t s" style="left:208.0px;top:60.8px;font-size:49.5px;color:#d0d0d0;transform:scaleX(0.9108);font-weight:700">&amp;</span>
<span class="t s" style="left:256.1px;top:60.8px;font-size:49.5px;color:#d0d0d0;transform:scaleX(1.0450);font-weight:700">Smarter</span>
<span class="t s" style="left:453.1px;top:60.8px;font-size:49.5px;color:#d0d0d0;transform:scaleX(1.0380);font-weight:700">Infrastructure</span>
<span class="t" style="left:59.5px;top:1460.9px;font-size:28px;color:#707072;transform:scaleX(0.9993)">16</span>
<span class="t" style="left:1711.4px;top:1465.6px;font-size:25.2px;color:#808082;transform:scaleX(1.0185)">© 2014 IBM Corporation</span>
<span class="t" style="left:138.4px;top:860.2px;font-size:17.6px;color:#222228;transform:scaleX(1.0988)">List</span>
<span class="t" style="left:214.7px;top:860.2px;font-size:17.6px;color:#2668ab;transform:scaleX(1.0286)">Person Group</span>
<span class="t" style="left:225.8px;top:930.1px;font-size:17.6px;color:#15151f;transform:scaleX(1.0321)">Person Group:</span>
<span class="t" style="left:351.4px;top:927.2px;font-size:17.6px;color:#fff;transform:scaleX(0.9477)">MAINT</span>
<span class="t" style="left:520.1px;top:927.6px;font-size:17.6px;color:#15151f;transform:scaleX(1.0254)">Maintenance Group</span>
<span class="t" style="left:1739.3px;top:922.2px;font-size:17.6px;color:#15151f;transform:scaleX(1.0447)">Attachments</span>
<div class="u" style="left:1739.6px;top:938.4px;width:101.3px;background:#15151f"></div>
<span class="t" style="left:144.5px;top:1011.2px;font-size:17.6px;color:#15151f;transform:scaleX(1.0927);font-weight:700">People</span>
<span class="t" style="left:263.2px;top:1011.2px;font-size:17.6px;color:#1c2f63;transform:scaleX(0.9837)">Filter</span>
<span class="t" style="left:571.4px;top:1011.2px;font-size:17.6px;color:#1c3a70;transform:scaleX(1.0590)">1 - 2 of 2</span>
<span class="t" style="left:1776.9px;top:1005.6px;font-size:17.6px;color:#1f4e9e;transform:scaleX(1.0702)">Download</span>
<div class="u" style="left:1778.5px;top:1021.8px;width:81.1px;background:#1f4e9e"></div>
<span class="t" style="left:169.2px;top:1055.6px;font-size:17.6px;color:#15151f;transform:scaleX(1.0428)">Person</span>
<div class="u" style="left:170.7px;top:1071.8px;width:55.5px;background:#15151f"></div>
<span class="t" style="left:354.7px;top:1055.6px;font-size:17.6px;color:#15151f;transform:scaleX(0.9786)">Name</span>
<span class="t" style="left:942.1px;top:1056.0px;font-size:17.6px;color:#15151f;transform:scaleX(1.0424)">Use for Organization</span>
<div class="u" style="left:943.6px;top:1072.2px;width:165.6px;background:#15151f"></div>
<span class="t" style="left:1128.7px;top:1056.0px;font-size:17.6px;color:#15151f;transform:scaleX(1.0575)">Use for Site</span>
<div class="u" style="left:1130.2px;top:1072.2px;width:95.1px;background:#15151f"></div>
<span class="t" style="left:1316.4px;top:1056.0px;font-size:17.6px;color:#15151f;transform:scaleX(1.0317)">Group Default?</span>
<div class="u" style="left:1317.5px;top:1072.2px;width:121.3px;background:#15151f"></div>
<span class="t" style="left:1449.7px;top:1056.0px;font-size:17.6px;color:#15151f;transform:scaleX(1.0225)">Site Default?</span>
<div class="u" style="left:1450.9px;top:1072.2px;width:101.3px;background:#15151f"></div>
<span class="t" style="left:1565.4px;top:1056.0px;font-size:17.6px;color:#15151f;transform:scaleX(1.0240)">Organization Default?</span>
<div class="u" style="left:1566.2px;top:1072.2px;width:172.9px;background:#15151f"></div>
<span class="t" style="left:1777.3px;top:1056.4px;font-size:17.6px;color:#15151f;transform:scaleX(1.0482)">Sequence</span>
<div class="u" style="left:1778.5px;top:1072.6px;width:81.1px;background:#15151f"></div>
<span class="t" style="left:174.7px;top:1099.4px;font-size:17.6px;color:#15151f;transform:scaleX(0.9241)">HUNTER</span>
<span class="t" style="left:174.8px;top:1146.1px;font-size:17.6px;color:#15151f;transform:scaleX(0.9722)">WILSON</span>
<span class="t" style="left:359.8px;top:1099.4px;font-size:17.6px;color:#15151f;transform:scaleX(1.0200)">John Hunter</span>
<span class="t" style="left:359.2px;top:1146.1px;font-size:17.6px;color:#15151f;transform:scaleX(1.0041)">Mike Wilson</span>
<span class="t" style="left:1134.8px;top:1099.1px;font-size:17.6px;color:#15151f;transform:scaleX(0.9325)">BEDFORD</span>
<span class="t" style="left:1134.8px;top:1145.7px;font-size:17.6px;color:#15151f;transform:scaleX(0.9325)">BEDFORD</span>
<span class="t" style="left:1860.5px;top:1099.8px;font-size:17.6px;color:#15151f;transform:scaleX(1.0000)">1</span>
<span class="t" style="left:1862.1px;top:1146.6px;font-size:17.6px;color:#15151f;transform:scaleX(1.0000)">2</span>
<span class="t" style="left:1802.0px;top:1196.5px;font-size:17.6px;color:#15151f;transform:scaleX(1.0948);font-weight:700">New Row</span>
<span class="t" style="left:59.8px;top:163.4px;font-size:69px;color:#073763;transform:scaleX(0.9702);font-weight:700">Person</span>
<span class="t" style="left:305.4px;top:163.4px;font-size:69px;color:#073763;transform:scaleX(1.0000);font-weight:700">Group</span>
<span class="t" style="left:531.6px;top:163.4px;font-size:69px;color:#073763;transform:scaleX(1.0089);font-weight:700">application</span>
<span class="t" style="left:113.1px;top:311.7px;font-size:45.9px;color:#000;transform:scaleX(0.9646)">A</span>
<span class="t" style="left:154.1px;top:311.7px;font-size:45.9px;color:#000;transform:scaleX(1.0238)">person</span>
<span class="t" style="left:309.3px;top:311.7px;font-size:45.9px;color:#000;transform:scaleX(1.0423)">group</span>
<span class="t" style="left:443.2px;top:311.7px;font-size:45.9px;color:#000;transform:scaleX(0.9552)">is</span>
<span class="t" style="left:486.4px;top:311.7px;font-size:45.9px;color:#000;transform:scaleX(0.9574)">a</span>
<span class="t" style="left:522.4px;top:311.7px;font-size:45.9px;color:#000;transform:scaleX(1.0781)">list</span>
<span class="t" style="left:594.4px;top:311.7px;font-size:45.9px;color:#000;transform:scaleX(1.1098)">of</span>
<span class="t" style="left:648.4px;top:311.7px;font-size:45.9px;color:#000;transform:scaleX(1.0338)">individuals</span>
<span class="t" style="left:881.5px;top:311.7px;font-size:45.9px;color:#000;transform:scaleX(1.0714)">who</span>
<span class="t" style="left:983.3px;top:311.7px;font-size:45.9px;color:#000;transform:scaleX(1.0185)">may</span>
<span class="t" style="left:1083.1px;top:311.7px;font-size:45.9px;color:#000;transform:scaleX(1.0018)">have</span>
<span class="t" style="left:1194.3px;top:311.7px;font-size:45.9px;color:#000;transform:scaleX(1.0416)">similar</span>
<span class="t" style="left:1343.9px;top:311.7px;font-size:45.9px;color:#000;transform:scaleX(1.0764)">job</span>
<span class="t" style="left:1421.4px;top:311.7px;font-size:45.9px;color:#000;transform:scaleX(1.0333)">responsibilities,</span>
<span class="t" style="left:1757.1px;top:311.7px;font-size:45.9px;color:#000;transform:scaleX(0.9990)">levels</span>
<span class="t" style="left:1885.9px;top:311.7px;font-size:45.9px;color:#000;transform:scaleX(1.1098)">of</span>
<span class="t" style="left:112.0px;top:371.9px;font-size:45.9px;color:#000;transform:scaleX(1.1032)">authority,</span>
<span class="t" style="left:328.0px;top:371.9px;font-size:45.9px;color:#000;transform:scaleX(1.0194)">and</span>
<span class="t" style="left:417.6px;top:371.9px;font-size:45.9px;color:#000;transform:scaleX(1.0337)">security</span>
<span class="t" style="left:592.6px;top:371.9px;font-size:45.9px;color:#000;transform:scaleX(0.9885)">clearances.</span>
<span class="t" style="left:113.2px;top:498.3px;font-size:40.7px;color:#000;transform:scaleX(1.0887)">After</span>
<span class="t" style="left:217.0px;top:498.3px;font-size:40.7px;color:#000;transform:scaleX(1.0396)">you</span>
<span class="t" style="left:295.4px;top:498.3px;font-size:40.7px;color:#000;transform:scaleX(1.0547)">define</span>
<span class="t" style="left:422.6px;top:498.3px;font-size:40.7px;color:#000;transform:scaleX(1.0253)">person</span>
<span class="t" style="left:560.4px;top:498.3px;font-size:40.7px;color:#000;transform:scaleX(1.0143)">groups,</span>
<span class="t" style="left:708.3px;top:498.3px;font-size:40.7px;color:#000;transform:scaleX(1.0476)">responsibility</span>
<span class="t" style="left:964.9px;top:498.3px;font-size:40.7px;color:#000;transform:scaleX(1.1271)">for</span>
<span class="t" style="left:1028.7px;top:498.3px;font-size:40.7px;color:#000;transform:scaleX(1.0224)">records</span>
<span class="t" style="left:1177.7px;top:498.3px;font-size:40.7px;color:#000;transform:scaleX(0.9830)">such</span>
<span class="t" style="left:1272.4px;top:498.3px;font-size:40.7px;color:#000;transform:scaleX(0.9172)">as</span>
<span class="t" style="left:1322.1px;top:498.3px;font-size:40.7px;color:#000;transform:scaleX(1.0788)">work</span>
<span class="t" style="left:1425.0px;top:498.3px;font-size:40.7px;color:#000;transform:scaleX(1.0333)">orders,</span>
<span class="t" style="left:1566.1px;top:498.3px;font-size:40.7px;color:#000;transform:scaleX(1.0431)">tickets,</span>
<span class="t" style="left:1708.4px;top:498.3px;font-size:40.7px;color:#000;transform:scaleX(1.0210)">and</span>
<span class="t" style="left:111.9px;top:552.4px;font-size:40.7px;color:#000;transform:scaleX(1.0114)">purchasing</span>
<span class="t" style="left:323.5px;top:552.4px;font-size:40.7px;color:#000;transform:scaleX(1.0224)">records</span>
<span class="t" style="left:472.5px;top:552.4px;font-size:40.7px;color:#000;transform:scaleX(0.9857)">can</span>
<span class="t" style="left:547.4px;top:552.4px;font-size:40.7px;color:#000;transform:scaleX(1.0240)">be</span>
<span class="t" style="left:604.0px;top:552.4px;font-size:40.7px;color:#000;transform:scaleX(0.9764)">assigned</span>
<span class="t" style="left:773.3px;top:552.4px;font-size:40.7px;color:#000;transform:scaleX(1.1513)">to</span>
<span class="t" style="left:822.6px;top:552.4px;font-size:40.7px;color:#000;transform:scaleX(0.9586)">a</span>
<span class="t" style="left:854.5px;top:552.4px;font-size:40.7px;color:#000;transform:scaleX(1.0437)">group</span>
<span class="t" style="left:973.4px;top:552.4px;font-size:40.7px;color:#000;transform:scaleX(1.0802)">rather</span>
<span class="t" style="left:1098.5px;top:552.4px;font-size:40.7px;color:#000;transform:scaleX(1.0668)">than</span>
<span class="t" style="left:1193.2px;top:552.4px;font-size:40.7px;color:#000;transform:scaleX(1.0054)">an</span>
<span class="t" style="left:1248.9px;top:552.4px;font-size:40.7px;color:#000;transform:scaleX(1.0523)">individual.</span>
<span class="t" style="left:113.2px;top:618.5px;font-size:40.7px;color:#000;transform:scaleX(0.9660)">A</span>
<span class="t" style="left:149.6px;top:618.5px;font-size:40.7px;color:#000;transform:scaleX(1.0253)">person</span>
<span class="t" style="left:287.5px;top:618.5px;font-size:40.7px;color:#000;transform:scaleX(1.0437)">group</span>
<span class="t" style="left:406.3px;top:618.5px;font-size:40.7px;color:#000;transform:scaleX(0.9857)">can</span>
<span class="t" style="left:481.2px;top:618.5px;font-size:40.7px;color:#000;transform:scaleX(1.0174)">receive</span>
<span class="t" style="left:624.9px;top:618.5px;font-size:40.7px;color:#000;transform:scaleX(0.9586)">a</span>
<span class="t" style="left:656.9px;top:618.5px;font-size:40.7px;color:#000;transform:scaleX(1.0491)">record</span>
<span class="t" style="left:788.1px;top:618.5px;font-size:40.7px;color:#000;transform:scaleX(1.0836)">routed</span>
<span class="t" style="left:923.4px;top:618.5px;font-size:40.7px;color:#000;transform:scaleX(1.0309)">by</span>
<span class="t" style="left:978.0px;top:618.5px;font-size:40.7px;color:#000;transform:scaleX(0.9586)">a</span>
<span class="t" style="left:1009.9px;top:618.5px;font-size:40.7px;color:#000;transform:scaleX(1.0943)">workflow</span>
<span class="t" style="left:1193.3px;top:618.5px;font-size:40.7px;color:#000;transform:scaleX(0.9889)">process.</span>
</body></html>
